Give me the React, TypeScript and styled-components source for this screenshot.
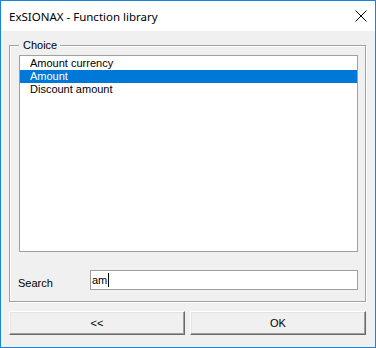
import React from "react";
import styled, { createGlobalStyle } from "styled-components";

const Global = createGlobalStyle`
  html, body { margin: 0; padding: 0; background: #ffffff; }
  * { box-sizing: border-box; }
`;

const Window = styled.div`
  width: 376px;
  height: 348px;
  border: 1px solid #1883d7;
  display: flex;
  flex-direction: column;
  background: #f0f0f0;
  font-family: "Liberation Sans", Arial, sans-serif;
  font-size: 11px;
  color: #000;
`;

const TitleBar = styled.div`
  height: 30px;
  background: #ffffff;
  display: flex;
  align-items: center;
  justify-content: space-between;
  padding: 0 0 0 8px;
`;

const Title = styled.span`
  font-family: "Noto Sans", "Liberation Sans", sans-serif;
  font-size: 11.5px;
  color: #000;
`;

const CloseBox = styled.div`
  width: 28px;
  height: 30px;
  display: flex;
  align-items: center;
  justify-content: center;
`;

const Body = styled.div`
  flex: 1;
  display: flex;
  flex-direction: column;
  padding: 14px 9px 0 8px;
  gap: 9px;
`;

const GroupBox = styled.div`
  position: relative;
  height: 257px;
  border: 1px solid #a0a0a0;
  box-shadow: inset 1px 1px 0 #ffffff, 1px 1px 0 #ffffff;
  padding: 9px 7px 11px 9px;
  display: flex;
  flex-direction: column;
`;

const Legend = styled.span`
  position: absolute;
  top: -8px;
  left: 9px;
  padding: 0 3px 0 4px;
  background: #f0f0f0;
  line-height: 14px;
`;

const ListBox = styled.div`
  height: 197px;
  border: 1px solid #a0a0a0;
  background: #ffffff;
  padding-top: 1px;
`;

const Item = styled.div<{ $selected?: boolean }>`
  height: 13px;
  line-height: 13px;
  padding-left: 10px;
  background: ${(p) => (p.$selected ? "#0078d7" : "transparent")};
  color: ${(p) => (p.$selected ? "#ffffff" : "#000000")};
  white-space: nowrap;
`;

const SearchRow = styled.div`
  margin-top: auto;
  display: flex;
  align-items: center;
`;

const SearchLabel = styled.span`
  width: 72px;
  padding-top: 5px;
  margin-left: -1px;
  padding-right: 1px;
`;

const SearchInput = styled.div`
  flex: 1;
  height: 20px;
  border: 1px solid #a0a0a0;
  background: #ffffff;
  display: flex;
  align-items: center;
  padding-left: 1px;
`;

const Caret = styled.span`
  display: inline-block;
  width: 1px;
  height: 14px;
  background: #000;
  margin-left: 1px;
`;

const ButtonRow = styled.div`
  display: flex;
  gap: 5px;
`;

const Button = styled.div`
  width: 176px;
  height: 24px;
  background: #f0f0f0;
  border-top: 1px solid #ffffff;
  border-left: 1px solid #ffffff;
  border-right: 1px solid #696969;
  border-bottom: 1px solid #696969;
  box-shadow: inset -1px -1px 0 #a0a0a0, inset 1px 1px 0 #e3e3e3;
  display: flex;
  align-items: center;
  justify-content: center;
`;

const items = ["Amount currency", "Amount", "Discount amount"];

export default function App() {
  return (
    <>
      <Global />
      <Window>
        <TitleBar>
          <Title>ExSIONAX - Function library</Title>
          <CloseBox>
            <svg width="12" height="12" viewBox="0 0 12 12">
              <path d="M0.5 0.5 L11.5 11.5 M11.5 0.5 L0.5 11.5" stroke="#000" strokeWidth="1" fill="none" />
            </svg>
          </CloseBox>
        </TitleBar>
        <Body>
          <GroupBox>
            <Legend>Choice</Legend>
            <ListBox>
              {items.map((t, i) => (
                <Item key={t} $selected={i === 1}>
                  {t}
                </Item>
              ))}
            </ListBox>
            <SearchRow>
              <SearchLabel>Search</SearchLabel>
              <SearchInput>
                am<Caret />
              </SearchInput>
            </SearchRow>
          </GroupBox>
          <ButtonRow>
            <Button>&lt;&lt;</Button>
            <Button>OK</Button>
          </ButtonRow>
        </Body>
      </Window>
    </>
  );
}
